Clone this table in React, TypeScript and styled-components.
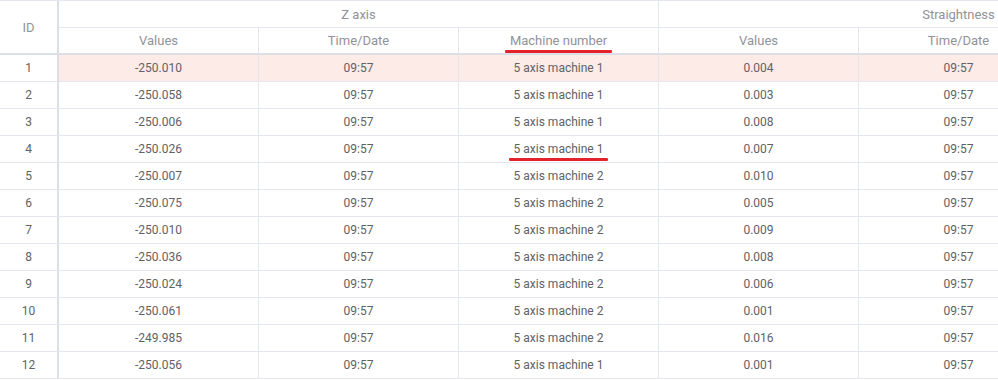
import React from "react";
import styled, { createGlobalStyle } from "styled-components";

const color = {
  LINE: "#e4e7ed",
  LINE_STRONG: "#dcdfe6",
  HEAD_TEXT: "#909399",
  TEXT: "#606266",
  HIGHLIGHT: "#fdebe7",
  MARK: "#e3222b",
};

interface IRow {
  id: number;
  zValue: string;
  zMachine: string;
  sValue: string;
  sMachine: string;
}

const rows: IRow[] = [
  { id: 1, zValue: "-250.010", zMachine: "5 axis machine 1", sValue: "0.004", sMachine: "5 axis machine 1" },
  { id: 2, zValue: "-250.058", zMachine: "5 axis machine 1", sValue: "0.003", sMachine: "5 axis machine 1" },
  { id: 3, zValue: "-250.006", zMachine: "5 axis machine 1", sValue: "0.008", sMachine: "5 axis machine 1" },
  { id: 4, zValue: "-250.026", zMachine: "5 axis machine 1", sValue: "0.007", sMachine: "5 axis machine 1" },
  { id: 5, zValue: "-250.007", zMachine: "5 axis machine 2", sValue: "0.010", sMachine: "5 axis machine 2" },
  { id: 6, zValue: "-250.075", zMachine: "5 axis machine 2", sValue: "0.005", sMachine: "5 axis machine 2" },
  { id: 7, zValue: "-250.010", zMachine: "5 axis machine 2", sValue: "0.009", sMachine: "5 axis machine 2" },
  { id: 8, zValue: "-250.036", zMachine: "5 axis machine 2", sValue: "0.008", sMachine: "5 axis machine 2" },
  { id: 9, zValue: "-250.024", zMachine: "5 axis machine 2", sValue: "0.006", sMachine: "5 axis machine 2" },
  { id: 10, zValue: "-250.061", zMachine: "5 axis machine 2", sValue: "0.001", sMachine: "5 axis machine 2" },
  { id: 11, zValue: "-249.985", zMachine: "5 axis machine 2", sValue: "0.016", sMachine: "5 axis machine 2" },
  { id: 12, zValue: "-250.056", zMachine: "5 axis machine 1", sValue: "0.001", sMachine: "5 axis machine 1" },
];

const subColumns = ["Values", "Time/Date", "Machine number"];

export default () => {
  return (
    <>
      <GlobalStyle />
      <Viewport>
        <Table>
          <HeadCell $rows={2} $strongRight $strongBottom>
            ID
          </HeadCell>
          <HeadCell $cols={3}>Z axis</HeadCell>
          <HeadCell $cols={3}>Straightness</HeadCell>
          {[0, 1].map((group) =>
            subColumns.map((name) => (
              <HeadCell key={`${group}-${name}`} $strongBottom>
                {group === 0 && name === "Machine number" ? <Marked>{name}</Marked> : name}
              </HeadCell>
            ))
          )}
          {rows.map((row) => {
            const hl = row.id === 1;
            return (
              <React.Fragment key={row.id}>
                <Cell $strongRight>{row.id}</Cell>
                <Cell $highlight={hl}>{row.zValue}</Cell>
                <Cell $highlight={hl}>09:57</Cell>
                <Cell $highlight={hl}>
                  {row.id === 4 ? <Marked>{row.zMachine}</Marked> : row.zMachine}
                </Cell>
                <Cell $highlight={hl}>{row.sValue}</Cell>
                <Cell $highlight={hl}>09:57</Cell>
                <Cell $highlight={hl}>{row.sMachine}</Cell>
              </React.Fragment>
            );
          })}
        </Table>
      </Viewport>
    </>
  );
};

const GlobalStyle = createGlobalStyle`
  html, body {
    margin: 0;
    padding: 0;
    background: #fff;
    overflow: hidden;
  }
  body {
    font-family: Roboto, "Liberation Sans", Arial, sans-serif;
    font-size: 12px;
  }
`;

const Viewport = styled.div`
  width: 998px;
  height: 380px;
  overflow: hidden;
`;

const Table = styled.div`
  display: grid;
  grid-template-columns: 59px repeat(6, 200px);
  grid-auto-rows: 27px;
  width: max-content;
  border-top: 1px solid ${color.LINE};
`;

const BaseCell = styled.div<{ $strongRight?: boolean; $strongBottom?: boolean }>`
  box-sizing: border-box;
  display: flex;
  align-items: center;
  justify-content: center;
  white-space: nowrap;
  border-right: ${(p) => (p.$strongRight ? `2px solid ${color.LINE_STRONG}` : `1px solid ${color.LINE}`)};
  border-bottom: ${(p) => (p.$strongBottom ? `2px solid ${color.LINE_STRONG}` : `1px solid ${color.LINE}`)};
`;

const HeadCell = styled(BaseCell)<{ $cols?: number; $rows?: number }>`
  grid-column: span ${(p) => p.$cols || 1};
  grid-row: span ${(p) => p.$rows || 1};
  font-size: 13px;
  color: ${color.HEAD_TEXT};
  background: #fff;
`;

const Cell = styled(BaseCell)<{ $highlight?: boolean }>`
  color: ${color.TEXT};
  background: ${(p) => (p.$highlight ? color.HIGHLIGHT : "#fff")};
`;

const Marked = styled.span`
  position: relative;

  &::after {
    content: "";
    position: absolute;
    left: -5px;
    right: -5px;
    bottom: -5px;
    height: 3px;
    border-radius: 1px;
    background: ${color.MARK};
  }
`;
